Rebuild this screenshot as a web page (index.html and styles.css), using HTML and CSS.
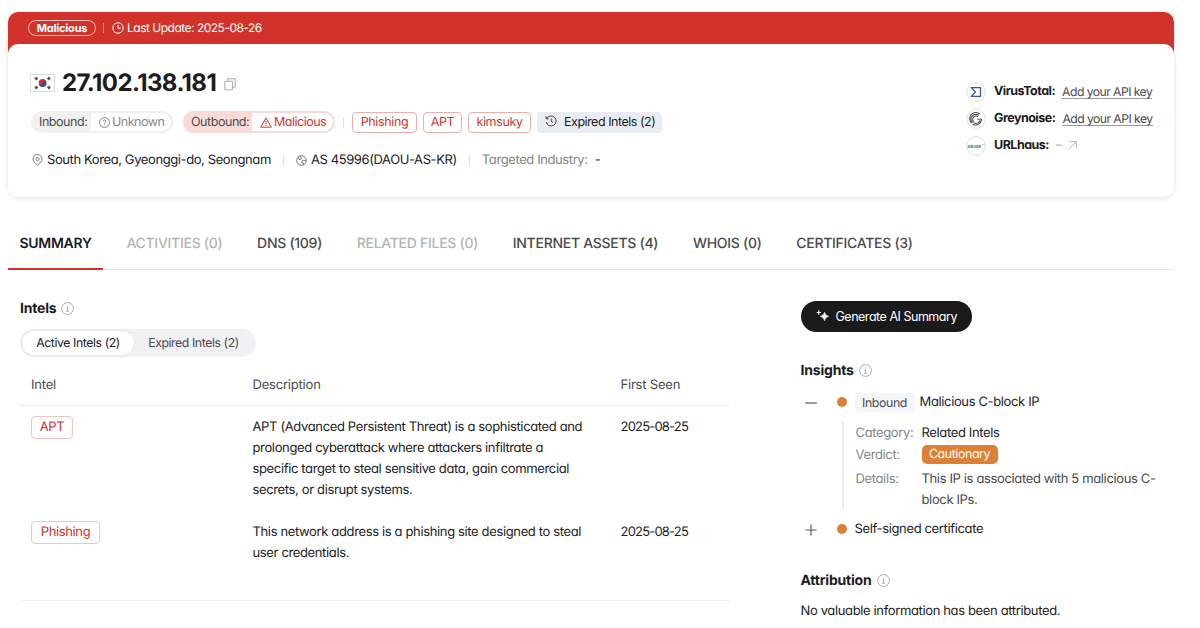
FILE: index.html
```html
<!DOCTYPE html>
<html lang="en">
<head>
  <meta charset="UTF-8" />
  <meta name="viewport" content="width=device-width, initial-scale=1.0"/>
  <title>27.102.138.181</title>
  <link rel="stylesheet" href="styles.css">
</head>
<body>
  <!-- IP header card -->
  <header class="ip-card">
    <div class="status-bar">
      <span class="status-pill">Malicious</span>
      <span class="bar-sep"></span>
      <svg class="clock" width="12" height="12" viewBox="0 0 12 12"><circle cx="6" cy="6" r="5.2"/><path d="M6 3v3.2h2.8"/></svg>
      <span>Last Update: 2025-08-26</span>
    </div>

    <div class="ip-body">
      <div class="ip-main">
        <div class="ip-title">
          <svg class="flag" width="25" height="18" viewBox="0 0 25 18">
            <rect x=".5" y=".5" width="24" height="17" fill="#fff" stroke="#dcdcdc"/>
            <path d="M8.7 9a3.9 3.9 0 0 1 7.8 0z" fill="#d0353c"/>
            <path d="M8.7 9a3.9 3.9 0 0 0 7.8 0z" fill="#24509e"/>
            <circle cx="10.7" cy="9.2" r="1.7" fill="#d0353c"/>
            <circle cx="14.5" cy="8.8" r="1.7" fill="#24509e"/>
            <path d="M5.2 5.4l2.2-1.8M17.8 14.4l2.2-1.8M17.8 3.6l2.2 1.8M5.2 12.6l2.2 1.8" stroke="#555" stroke-width="2.8"/>
          </svg>
          <h1>27.102.138.181</h1>
          <svg class="copy" width="12" height="13" viewBox="0 0 12 13"><path d="M3.7 3V.8h7.5v8.4H8.6M.8 3.3h7.6v8.6H.8z"/></svg>
        </div>

        <div class="tag-row">
          <div class="direction inbound">
            <span class="direction-name">Inbound:</span>
            <span class="direction-value">
              <svg width="11" height="11" viewBox="0 0 11 11"><circle cx="5.5" cy="5.5" r="4.9"/><path d="M4.1 4.3a1.4 1.4 0 1 1 2 1.3c-.5.2-.6.5-.6.9M5.5 7.4v.9"/></svg>
              <span>Unknown</span>
            </span>
          </div>
          <div class="direction outbound">
            <span class="direction-name">Outbound:</span>
            <span class="direction-value">
              <svg width="12" height="11" viewBox="0 0 12 11"><path d="M6 .9L11.3 10.2H.7zM6 4v3.2M6 8v1"/></svg>
              <span>Malicious</span>
            </span>
          </div>
          <span class="sep"></span>
          <span class="tag tag-phishing">Phishing</span>
          <span class="tag tag-apt">APT</span>
          <span class="tag tag-kimsuky">kimsuky</span>
          <span class="expired-tag">
            <svg width="12" height="12" viewBox="0 0 12 12"><path d="M1.7 3.6A5 5 0 1 1 1.2 7M1.1 1.2v2.6h2.6M6.2 3.6v2.7l2 1.2"/></svg>
            <span>Expired Intels (2)</span>
          </span>
        </div>

        <div class="meta-row">
          <svg class="pin" width="11" height="12" viewBox="0 0 11 12"><path d="M5.5 11.2C2.5 8.8 1 7 1 5a4.5 4.5 0 0 1 9 0c0 2-1.5 3.8-4.5 6.2z"/><circle cx="5.5" cy="5" r="1.6"/></svg>
          <span>South Korea, Gyeonggi-do, Seongnam</span>
          <span class="sep"></span>
          <svg class="globe" width="11" height="11" viewBox="0 0 11 11"><circle cx="5.5" cy="5.5" r="4.8"/><path d="M2.2 2.2l.8 2 1.800.500.600-1.700L4.200 1M10.200 6l-2.700-.700-1.800.900.500 1.600 1.300.500v1.500"/></svg>
          <span>AS 45996(DAOU-AS-KR)</span>
          <span class="sep"></span>
          <span class="muted">Targeted Industry:</span>
          <span class="dash">-</span>
        </div>
      </div>

      <div class="sources">
        <div class="source">
          <svg width="20" height="20" viewBox="0 0 20 20"><circle class="ring" cx="10" cy="10" r="9.3" stroke="#c9d0ea"/><path d="M5.5 5.6h9v8.8h-9l4-4.4z" fill="none" stroke="#3e51b5" stroke-width="1.3"/></svg>
          <b>VirusTotal:</b>
          <a href="#">Add your API key</a>
        </div>
        <div class="source">
          <svg width="20" height="20" viewBox="0 0 20 20"><circle class="ring" cx="10" cy="10" r="9.3"/><g fill="none" stroke="#555" stroke-width="1.1"><path d="M14 5.2A6 6 0 0 0 5.5 14M13 6.4A4.7 4.7 0 0 0 6.6 13.6M12 7.5a3.4 3.4 0 0 0-3.8 5.7"/><path d="M6.5 15.2a6 6 0 0 0 9-4.9h-4.2M8 14a4.7 4.7 0 0 0 6-2.5"/></g></svg>
          <b>Greynoise:</b>
          <a href="#">Add your API key</a>
        </div>
        <div class="source">
          <svg width="20" height="20" viewBox="0 0 20 20"><circle class="ring" cx="10" cy="10" r="9.3"/><text class="abuse" x="1.5" y="11.5">ABUSE</text><path d="M15.4 8.9h3" stroke="#9db2c2" stroke-width=".8"/></svg>
          <b>URLhaus:</b>
          <span class="source-none">–</span>
          <svg class="arrow" width="9" height="9" viewBox="0 0 9 9"><path d="M.6 8.4L8.2.8M1.6.7h6.7v6.7"/></svg>
        </div>
      </div>
    </div>
  </header>

  <nav class="tabs">
    <a class="tab active" href="#">SUMMARY</a>
    <a class="tab disabled" href="#">ACTIVITIES (0)</a>
    <a class="tab" href="#">DNS (109)</a>
    <a class="tab disabled" href="#">RELATED FILES (0)</a>
    <a class="tab" href="#">INTERNET ASSETS (4)</a>
    <a class="tab" href="#">WHOIS (0)</a>
    <a class="tab" href="#">CERTIFICATES (3)</a>
  </nav>

  <main class="container">
    <!-- Intels -->
    <section class="intels">
      <h2><span>Intels</span> <svg class="info" width="13" height="13" viewBox="0 0 13 13"><circle cx="6.5" cy="6.5" r="5.9"/><path d="M5.4 5.7h1.2v3.6M5.2 9.3h2.7M6.5 3.4v1"/></svg></h2>
      <div class="toggle">
        <span class="toggle-item selected">Active Intels (2)</span>
        <span class="toggle-item">Expired Intels (2)</span>
      </div>
      <div class="table">
        <div class="row head">
          <span>Intel</span>
          <span>Description</span>
          <span>First Seen</span>
        </div>
        <div class="row">
          <div><span class="tag tag-big tag-apt">APT</span></div>
          <p>APT (Advanced Persistent Threat) is a sophisticated and<br>prolonged cyberattack where attackers infiltrate a<br>specific target to steal sensitive data, gain commercial<br>secrets, or disrupt systems.</p>
          <span class="date">2025-08-25</span>
        </div>
        <div class="row">
          <div><span class="tag tag-big tag-phishing">Phishing</span></div>
          <p>This network address is a phishing site designed to steal<br>user credentials.</p>
          <span class="date">2025-08-25</span>
        </div>
      </div>
    </section>

    <!-- AI summary, insights, attribution -->
    <aside class="side">
      <button class="ai-button">
        <svg width="14" height="12" viewBox="0 0 14 12"><path d="M8.5 2.2q.7 3.300 4.200 4.100-3.500.900-4.200 4.500-.700-3.600-4.200-4.500 3.500-.800 4.200-4.100z" stroke="#fff" stroke-width=".6"/><path d="M2.8.3v4.4M.6 2.5H5" stroke="#fff" stroke-width="1.1"/></svg>
        <span>Generate AI Summary</span>
      </button>

      <h2><span>Insights</span> <svg class="info" width="13" height="13" viewBox="0 0 13 13"><circle cx="6.5" cy="6.5" r="5.9"/><path d="M5.4 5.7h1.2v3.6M5.2 9.3h2.7M6.5 3.4v1"/></svg></h2>
      <div class="insight">
        <svg class="expander" width="12" height="12" viewBox="0 0 12 12"><path d="M.2 6h11.6"/></svg>
        <span class="dot"></span>
        <span class="chip">Inbound</span>
        <span>Malicious C-block IP</span>
      </div>
      <dl class="details">
        <dt>Category:</dt>
        <dd class="strong">Related Intels</dd>
        <dt>Verdict:</dt>
        <dd><span class="verdict">Cautionary</span></dd>
        <dt>Details:</dt>
        <dd>This IP is associated with 5 malicious C-<br>block IPs.</dd>
      </dl>
      <div class="insight">
        <svg class="expander" width="12" height="12" viewBox="0 0 12 12"><path d="M.5 6h11M6 .5v11"/></svg>
        <span class="dot"></span>
        <span>Self-signed certificate</span>
      </div>

      <h2 class="attribution"><span>Attribution</span> <svg class="info" width="13" height="13" viewBox="0 0 13 13"><circle cx="6.5" cy="6.5" r="5.9"/><path d="M5.4 5.7h1.2v3.6M5.2 9.3h2.7M6.5 3.4v1"/></svg></h2>
      <p class="none">No valuable information has been attributed.</p>
    </aside>
  </main>
</body>
</html>
```

FILE: styles.css
```css
* {
  box-sizing: border-box;
}

body {
  font-family: Inter, "Liberation Sans", sans-serif;
  font-feature-settings: "cv11";
  font-size: 13px;
  letter-spacing: -0.36px;
  line-height: 21px;
  text-rendering: geometricPrecision;
  margin: 0;
  padding: 12px 26px 0 8px;
  background-color: #fff;
  color: #1c1c1e;
  white-space: nowrap;
  overflow: hidden;
}

h1, h2, p, dl, dd {
  margin: 0;
}

svg {
  flex: none;
  fill: none;
}

a {
  color: inherit;
  text-decoration: none;
}

/* header card */
.ip-card {
  height: 185px;
  border-radius: 10px;
  background: linear-gradient(#d1332b 40px, #fff 40px);
  box-shadow: 0 1px 5px rgba(0,0,0,0.13);
}

.status-bar {
  display: flex;
  align-items: center;
  height: 32px;
  padding-left: 20px;
  color: #fff;
  font-size: 12px;
  letter-spacing: -0.5px;
  line-height: 19px;
}

.status-bar span:last-child {
  margin-bottom: 2px;
}

.status-pill {
  width: 68px;
  height: 16px;
  border: 1px solid #f3c1be;
  border-radius: 8px;
  font-size: 11px;
  font-weight: 700;
  letter-spacing: -0.2px;
  line-height: 14px;
  text-align: center;
}

.bar-sep {
  width: 1px;
  height: 10px;
  margin: 0 8px 0 7px;
  background: #e58580;
}

.clock {
  margin: 0 3px 1px 0;
  stroke: #fff;
}

.ip-body {
  display: flex;
  justify-content: space-between;
  height: 153px;
  padding: 25px 23px 0 22px;
  border-radius: 10px;
  background: #fff;
}

.ip-title {
  display: flex;
  align-items: center;
  height: 28px;
}

.ip-title h1 {
  width: 154px;
  margin: 0 8px 0 7px;
  font-size: 24px;
  font-weight: 650;
  letter-spacing: -0.6px;
  line-height: 28px;
}

.copy {
  margin-top: 3px;
  stroke: #aaa;
}

.tag-row {
  display: flex;
  align-items: center;
  height: 22px;
  margin: 14px 0 0 1px;
  font-size: 12.5px;
}

.direction {
  display: flex;
  height: 22px;
  border: 2px solid #f0f0f0;
  border-radius: 11px;
  overflow: hidden;
  line-height: 19px;
}

.direction-name {
  padding-left: 6px;
  background: #f0f0f0;
  color: #4a4a4c;
  letter-spacing: -0.45px;
}

.direction-value {
  display: flex;
  align-items: center;
  gap: 2px;
  padding-left: 8px;
  color: #858585;
  letter-spacing: -0.5px;
  stroke: #858585;
}

.direction-value span {
  stroke: none;
}

.inbound {
  width: 142px;
  margin-right: 10px;
}

.inbound .direction-name {
  width: 58px;
}

.outbound {
  width: 152px;
  border-color: #f8dbd9;
}

.outbound .direction-name {
  width: 67px;
  background: #f8dbd9;
}

.outbound .direction-value {
  color: #d1332b;
  stroke: #d1332b;
}

.sep {
  width: 1px;
  height: 11px;
  background: #e0e0e0;
}

.tag-row .sep {
  margin: 0 8px;
}

.tag {
  display: inline-block;
  height: 21px;
  margin-right: 6px;
  border: 1px solid #efaeab;
  border-radius: 4px;
  color: #d1332b;
  font-size: 12.5px;
  line-height: 20px;
  text-align: center;
}

.tag-phishing {
  width: 65px;
}

.tag-apt {
  width: 39px;
}

.tag-kimsuky {
  width: 63px;
}

.expired-tag {
  display: flex;
  align-items: center;
  gap: 7px;
  width: 125px;
  height: 21px;
  padding-left: 8px;
  border-radius: 4px;
  background: #e9edf3;
  letter-spacing: -0.48px;
  line-height: 21px;
}

.expired-tag svg {
  margin-bottom: 2px;
  stroke: #444;
}

.meta-row {
  display: flex;
  align-items: center;
  height: 21px;
  margin: 17px 0 0 2px;
  letter-spacing: -0.4px;
}

.meta-row svg {
  margin: 0 4px 1px 0;
  stroke: #6b6b6b;
  stroke-width: .9;
}

.meta-row .sep {
  margin: 0 12px;
}

.muted {
  color: #858585;
}

.dash {
  margin-left: 7px;
}

.sources {
  width: 185px;
  padding-top: 9px;
}

.source {
  display: flex;
  align-items: center;
  height: 27px;
  font-size: 12.5px;
  letter-spacing: -0.5px;
}

.source b {
  margin: 0 7px 1px 8px;
  font-weight: 650;
}

.source a {
  height: 15px;
  margin-bottom: 1px;
  border-bottom: 1px solid #999;
  color: #4a4a4c;
  font-size: 12.2px;
  letter-spacing: -0.55px;
  line-height: 15px;
}

.ring {
  stroke: #ddd;
}

.abuse {
  fill: #456a80;
  font-size: 4px;
  font-weight: 700;
  letter-spacing: 0;
}

.source-none {
  color: #aaa;
}

.arrow {
  margin-left: 6px;
  stroke: #b5b5b5;
}

/* tabs */
.tabs {
  display: flex;
  gap: 11.7px;
  height: 54px;
  margin-top: 19px;
  border-bottom: 1px solid #e9e9e9;
  font-size: 14px;
  letter-spacing: -0.28px;
}

.tab {
  height: 54px;
  padding: 0 11.5px;
  color: #4a4a4c;
  font-weight: 500;
  line-height: 55px;
}

.tab.active {
  border-bottom: 2px solid #d1332b;
  color: #1c1c1e;
  font-weight: 600;
}

.tab.disabled {
  color: #b4b4b4;
}

/* content columns */
.container {
  display: grid;
  grid-template-columns: 710px 1fr;
  column-gap: 70.5px;
  padding-left: 12px;
}

h2 {
  display: flex;
  align-items: center;
  gap: 5px;
  height: 20px;
  font-size: 14px;
  font-weight: 650;
  letter-spacing: -0.2px;
}

.info {
  margin-top: 1px;
  stroke: #999;
  stroke-width: .8;
}

.intels {
  padding-top: 28px;
}

.toggle {
  display: flex;
  width: 236px;
  height: 28px;
  margin-top: 11px;
  padding: 2px;
  border-radius: 14px;
  background: #f0f1f3;
  color: #4a4a4c;
  font-size: 12.3px;
  letter-spacing: -0.42px;
}

.toggle-item {
  width: 119px;
  line-height: 24px;
  text-align: center;
}

.toggle-item.selected {
  width: 112px;
  border-radius: 12px;
  background: #fff;
  box-shadow: 0 0 3px rgba(0,0,0,0.1);
  color: #1c1c1e;
}

.table {
  height: 244px;
  border-bottom: 1px solid #efefef;
}

.row {
  display: grid;
  grid-template-columns: 221.5px 368px 1fr;
  padding: 11px 0 10px 11px;
}

.row.head {
  height: 49px;
  padding-top: 18px;
  border-bottom: 1px solid #ebebeb;
  color: #4a4a4c;
  letter-spacing: -0.2px;
}

.date {
  letter-spacing: -0.8px;
}

.tag-big {
  height: 23px;
  margin-top: -1px;
  border-color: #f3c4c2;
  font-size: 13px;
  line-height: 21px;
}

.tag-big.tag-apt {
  width: 42px;
}

.tag-big.tag-phishing {
  width: 69px;
}

.side {
  padding-top: 31px;
}

.ai-button {
  display: flex;
  align-items: center;
  gap: 6px;
  width: 171px;
  height: 31px;
  margin-bottom: 28px;
  padding: 0 0 1px 15px;
  border: none;
  border-radius: 16px;
  background: #1a1a1a;
  color: #fff;
  font: inherit;
  font-size: 12.5px;
  letter-spacing: -0.48px;
}

.ai-button path {
  fill: #fff;
}

.insight {
  display: flex;
  align-items: center;
  height: 22px;
  padding-left: 4px;
}

h2 + .insight {
  margin-top: 11px;
}

.expander {
  margin: 2px 20px 0 0;
  stroke: #555;
  stroke-width: 1.2;
}

.dot {
  width: 10px;
  height: 10px;
  margin-right: 8px;
  border-radius: 50%;
  background: #db8035;
}

.chip {
  width: 60px;
  height: 19px;
  margin-right: 5px;
  border-radius: 3px;
  background: #f5f6f8;
  color: #4a4a4c;
  font-size: 12.3px;
  line-height: 19px;
  text-align: center;
}

.details {
  display: grid;
  grid-template-columns: 66px 1fr;
  grid-template-rows: 22px 24px 42px;
  height: 87px;
  margin: 9px 0 9px 41px;
  padding: 1px 0 0 12px;
  border-left: 2px solid #ededed;
  color: #858585;
}

.details dd {
  color: #4a4a4c;
}

.details .strong {
  color: #1c1c1e;
}

.verdict {
  display: block;
  width: 76px;
  height: 19px;
  border-radius: 5px;
  background: #db8035;
  color: #fff;
  font-size: 12.4px;
  letter-spacing: -0.4px;
  line-height: 18px;
  text-align: center;
}

.attribution {
  margin-top: 30px;
}

.none {
  margin-top: 11px;
}
```
